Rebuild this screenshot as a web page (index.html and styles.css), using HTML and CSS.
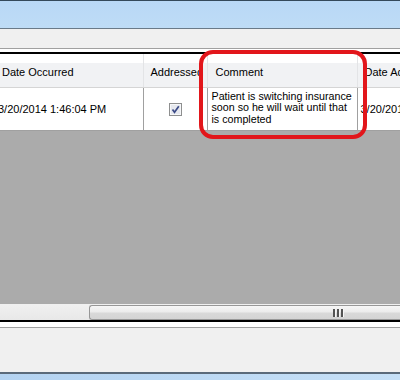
FILE: index.html
```html
<!DOCTYPE html>
<html>
<head>
<meta charset="UTF-8">
<link rel="stylesheet" href="styles.css">
</head>
<body>
<div class="win">
  <div class="titlebar"></div>
  <div class="toolbar"></div>
  <div class="gap"></div>
  <div class="grid">
    <div class="grid-inner">
      <table class="rows">
        <colgroup>
          <col class="c-date">
          <col class="c-addr">
          <col class="c-comment">
          <col class="c-dateadd">
        </colgroup>
        <tr class="head">
          <th>Date Occurred</th>
          <th>Addressed</th>
          <th class="h-comment">Comment</th>
          <th>Date Added</th>
        </tr>
        <tr class="row">
          <td class="mid">3/20/2014 1:46:04 PM</td>
          <td class="chk">
            <svg width="13" height="13" viewBox="0 0 13 13">
              <rect x="0.5" y="0.5" width="12" height="12" fill="#f4f4f4" stroke="#8e8f8f"/>
              <rect x="1.5" y="1.5" width="10" height="10" fill="#e6e8ee" stroke="#f6f7f9"/>
              <path d="M3.5 6.5 L5.5 9.2 L9.8 3.3" fill="none" stroke="#3b4a87" stroke-width="1.7"/>
            </svg>
          </td>
          <td class="wrap">Patient is switching insurance soon so he will wait until that is completed</td>
          <td class="mid">3/20/2014 1:46:04 PM</td>
        </tr>
      </table>
      <div class="empty"></div>
    </div>
    <div class="hscroll">
      <div class="thumb"><span class="grip"><i></i><i></i><i></i></span></div>
    </div>
  </div>
  <div class="gap2"></div>
  <div class="panel"></div>
  <div class="bottom"></div>
  <div class="callout"></div>
</div>
</body>
</html>
```
FILE: styles.css
```css
body {
  margin: 0;
  background: #f0f0f0;
  font-family: "Liberation Sans", Arial, sans-serif;
  font-size: 11px;
  color: #000;
}
.win {
  position: relative;
  width: 400px;
  height: 380px;
  overflow: hidden;
}
.titlebar {
  height: 27px;
  border-top: 1px solid #34495b;
  border-bottom: 1px solid #6a7a88;
  background: linear-gradient(#b9d8f6, #bedcf6);
}
.toolbar {
  height: 19px;
  background: #f0f0f0;
  border-bottom: 1px solid #a0a0a0;
}
.gap {
  height: 3px;
  background: #fff;
}
.grid {
  border-top: 2px solid #000;
  border-bottom: 2px solid #000;
  background: #ababab;
}
.grid-inner {
  overflow: hidden;
  height: 250px;
}
table.rows {
  border-collapse: collapse;
  table-layout: fixed;
  margin-left: -5px;
  width: 440px;
  background: #fff;
}
col.c-date { width: 148px; }
col.c-addr { width: 64px; }
col.c-comment { width: 150px; }
col.c-dateadd { width: 78px; }
tr.head { height: 33px; }
tr.row { height: 43px; }
tr.head th {
  padding: 3px 0 0 7px;
  font-weight: normal;
  text-align: left;
  white-space: nowrap;
  overflow: hidden;
  background: linear-gradient(#ffffff 0, #ffffff 9px, #f1f2f4 9px, #f1f2f4 100%);
  border-right: 1px solid #e3e4e6;
  border-bottom: 1px solid #d5d5d5;
}
tr.head th.h-comment { padding-left: 8px; }
tr.row td {
  padding: 0 3px;
  border-right: 1px solid #a0a0a0;
  border-bottom: 1px solid #a0a0a0;
  white-space: nowrap;
  overflow: hidden;
}
td.mid { vertical-align: middle; }
td.chk { text-align: center; vertical-align: middle; }
td.chk svg { display: block; margin: 1px auto 0 auto; }
tr.row td.wrap {
  white-space: normal;
  vertical-align: top;
  font-size: 10.7px;
  line-height: 11.7px;
  padding: 3px 0 0 4px;
}
.empty { height: 10px; }
.hscroll {
  height: 15px;
  border-top: 1px solid #f0f0f0;
  background: linear-gradient(#f0f0f0, #e8e8e8);
  padding-left: 89px;
}
.thumb {
  height: 13px;
  border: 1px solid #979797;
  border-right: none;
  border-radius: 3px 0 0 3px;
  background: linear-gradient(#f6f6f6 0, #ececec 45%, #d9d9d9 55%, #d4d4d4 100%);
  display: flex;
  align-items: center;
  padding-left: 243px;
}
.grip {
  display: flex;
  gap: 1px;
}
.grip i {
  display: block;
  width: 2px;
  height: 8px;
  background: #545454;
  border-right: 1px solid #f6f6f6;
}
.gap2 {
  height: 5px;
  background: #fff;
  border-bottom: 1px solid #a0a0a0;
}
.panel {
  height: 44px;
  background: #f0f0f0;
}
.bottom {
  height: 6px;
  border-top: 2px solid #5a6a7a;
  background: linear-gradient(90deg, #b4d3f1, #c6e0f7);
}
.callout {
  position: absolute;
  left: 199px;
  top: 50px;
  width: 160px;
  height: 81px;
  border: 4px solid #e2161b;
  border-radius: 14px;
}
```
